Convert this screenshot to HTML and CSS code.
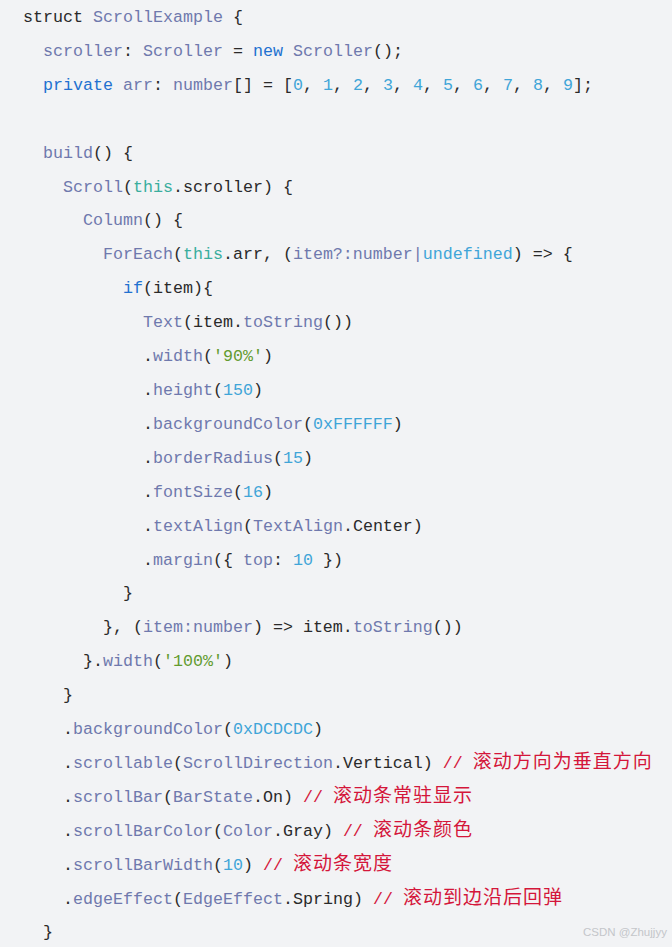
FILE: index.html
```html
<!DOCTYPE html>
<html lang="zh-CN">
<head>
<meta charset="utf-8">
<title>ScrollExample</title>
<link rel="stylesheet" href="styles.css">
</head>
<body>
<div class="block">
<pre class="code"><code>struct <span class="t">ScrollExample</span> {
  <span class="t">scroller</span>: <span class="t">Scroller</span> = <span class="k">new</span> <span class="t">Scroller</span>();
  <span class="k">private</span> <span class="t">arr</span>: <span class="t">number</span>[] = [<span class="n">0</span>, <span class="n">1</span>, <span class="n">2</span>, <span class="n">3</span>, <span class="n">4</span>, <span class="n">5</span>, <span class="n">6</span>, <span class="n">7</span>, <span class="n">8</span>, <span class="n">9</span>];

  <span class="t">build</span>() {
    <span class="t">Scroll</span>(<span class="h">this</span>.scroller) {
      <span class="t">Column</span>() {
        <span class="t">ForEach</span>(<span class="h">this</span>.arr, (<span class="t">item?:number|</span><span class="n">undefined</span>) =&gt; {
          <span class="k">if</span>(item){
            <span class="t">Text</span>(item.<span class="t">toString</span>())
            .<span class="t">width</span>(<span class="s">'90%'</span>)
            .<span class="t">height</span>(<span class="n">150</span>)
            .<span class="t">backgroundColor</span>(<span class="n">0xFFFFFF</span>)
            .<span class="t">borderRadius</span>(<span class="n">15</span>)
            .<span class="t">fontSize</span>(<span class="n">16</span>)
            .<span class="t">textAlign</span>(<span class="t">TextAlign</span>.Center)
            .<span class="t">margin</span>({ <span class="t">top</span>: <span class="n">10</span> })
          }
        }, (<span class="t">item:number</span>) =&gt; item.<span class="t">toString</span>())
      }.<span class="t">width</span>(<span class="s">'100%'</span>)
    }
    .<span class="t">backgroundColor</span>(<span class="n">0xDCDCDC</span>)
    .<span class="t">scrollable</span>(<span class="t">ScrollDirection</span>.Vertical) <span class="c">// <span class="z">滚动方向为垂直方向</span></span>
    .<span class="t">scrollBar</span>(<span class="t">BarState</span>.On) <span class="c">// <span class="z">滚动条常驻显示</span></span>
    .<span class="t">scrollBarColor</span>(<span class="t">Color</span>.Gray) <span class="c">// <span class="z">滚动条颜色</span></span>
    .<span class="t">scrollBarWidth</span>(<span class="n">10</span>) <span class="c">// <span class="z">滚动条宽度</span></span>
    .<span class="t">edgeEffect</span>(<span class="t">EdgeEffect</span>.Spring) <span class="c">// <span class="z">滚动到边沿后回弹</span></span>
  }</code></pre>
<div class="mark">CSDN @Zhujjyy</div>
</div>
</body>
</html>
```

FILE: styles.css
```css
html, body {
  margin: 0;
  padding: 0;
  background: #ffffff;
}

.block {
  position: relative;
  width: 672px;
  height: 947px;
  background: #f2f3f5;
  overflow: hidden;
}

.code {
  margin: 0;
  padding: 1px 0 0 23px;
  font-family: "Liberation Mono", "Noto Sans CJK SC", monospace;
  font-size: 16.667px;
  line-height: 33.9px;
  color: #2a2a2a;
  white-space: pre;
}

.code code {
  font-family: inherit;
}

.t { color: #6f79ad; }
.k { color: #2271d0; }
.n { color: #40a5d8; }
.s { color: #629b2f; }
.h { color: #3aae9e; }
.c { color: #d4163a; }

.z {
  font-family: "Noto Sans CJK SC", sans-serif;
  font-size: 19px;
  line-height: 16px;
  letter-spacing: 1px;
}

.mark {
  position: absolute;
  left: 583px;
  top: 926px;
  font-family: "Liberation Sans", Arial, sans-serif;
  font-size: 11.5px;
  color: #c4c6ca;
  white-space: nowrap;
}
```
